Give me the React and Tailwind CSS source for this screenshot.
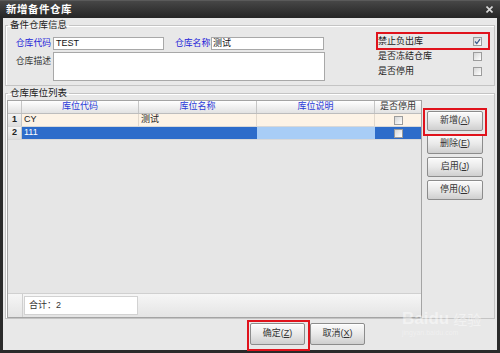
import React from "react";

function Check({ checked }) {
  return (
    <span className="flex h-[9px] w-[9px] items-center justify-center border border-[#9c9c9c] bg-gradient-to-br from-[#d6d6d6] to-white">
      {checked && (
        <svg width="7" height="7" viewBox="0 0 7 7">
          <path d="M1 3.5 L2.8 5.5 L6 1.2" fill="none" stroke="#3b5a8c" strokeWidth="1.2" />
        </svg>
      )}
    </span>
  );
}

function Btn({ label, mn, className = "" }) {
  return (
    <div
      className={`flex items-center justify-center rounded-[2px] border border-[#8c8c8c] bg-gradient-to-b from-[#fbfbfb] via-[#e9e9e9] to-[#cfcfcf] text-[9px] text-[#333] shadow-[inset_0_1px_0_#fff] ${className}`}
    >
      {label}(<span className="underline">{mn}</span>)
    </div>
  );
}

const rows = [
  { n: "1", code: "CY", name: "测试", selected: false },
  { n: "2", code: "111", name: "", selected: true },
];

export default function App() {
  return (
    <div className="relative flex h-[353px] w-[500px] flex-col overflow-hidden bg-[#2a2a2a] font-['Liberation_Sans','Noto_Sans_CJK_SC',sans-serif]">
      {/* title bar */}
      <div className="flex h-[18px] shrink-0 items-center justify-between border-t border-[#5a5a5a] bg-gradient-to-b from-[#474747] to-[#252525] pl-[6px] pr-[7px]">
        <span className="text-[10.5px] font-bold tracking-[0.5px] text-white">新增备件仓库</span>
        <svg width="7" height="7" viewBox="0 0 7 7">
          <path d="M0.5 0.5 L6.5 6.5 M6.5 0.5 L0.5 6.5" stroke="#d8d8d8" strokeWidth="1.6" />
        </svg>
      </div>

      {/* body */}
      <div className="mx-[3px] mb-[3px] flex flex-1 flex-col bg-[#e8e8e8] px-[2px]">
        {/* group 1 */}
        <fieldset className="mt-[1px] border border-[#c4c4c4] shadow-[inset_1px_1px_0_#fff]">
          <legend className="ml-[2px] px-[2px] text-[9.5px] leading-[12px] text-[#222]">备件仓库信息</legend>
          <div className="flex pb-[4px] pt-[6px]">
            <div className="flex flex-col gap-[2px]">
              <div className="flex h-[13px] items-center whitespace-nowrap text-[8.8px]">
                <span className="w-[47px] pr-[2px] text-right text-[#2323d8]">仓库代码</span>
                <div className="flex h-[13px] w-[111px] items-center border border-[#a8a8a8] bg-white pl-[2px] text-[9px] text-[#111]">TEST</div>
                <span className="ml-[11px] w-[36px] text-[#2323d8]">仓库名称</span>
                <div className="flex h-[13px] w-[113px] items-center border border-[#a8a8a8] bg-white pl-[1px] text-[9px] text-[#111]">测试</div>
              </div>
              <div className="flex h-[29px] whitespace-nowrap text-[8.8px]">
                <span className="w-[47px] pr-[2px] pt-[3px] text-right text-[#333]">仓库描述</span>
                <div className="h-[29px] w-[272px] border border-[#a8a8a8] bg-white" />
              </div>
            </div>
            <div className="-mt-[3px] ml-[49px] flex w-[114px] flex-col text-[9px] text-[#222]">
              {[
                ["禁止负出库", true],
                ["是否冻结仓库", false],
                ["是否停用", false],
              ].map(([t, c]) => (
                <div key={t} className="flex h-[15px] items-center justify-between pl-[4px] pr-[6px]">
                  <span>{t}</span>
                  <Check checked={c} />
                </div>
              ))}
            </div>
          </div>
        </fieldset>

        {/* group 2 */}
        <fieldset className="mt-[1px] border border-[#c4c4c4] shadow-[inset_1px_1px_0_#fff]">
          <legend className="ml-[2px] px-[2px] text-[9.5px] leading-[12px] text-[#222]">仓库库位列表</legend>
          <div className="flex pt-[1px]">
            {/* table */}
            <div className="ml-[1px] flex h-[218px] w-[415px] flex-col border border-[#a4a4a4] bg-[#e6e6e6]">
              <div className="flex h-[13px] border-b border-[#bdbdbd] bg-gradient-to-b from-white to-[#e2e2e2] text-[9px] text-[#2a3ad8]">
                <div className="w-[14px] border-r border-[#c6c6c6]" />
                <div className="flex w-[117px] items-center justify-center border-r border-[#c6c6c6]">库位代码</div>
                <div className="flex w-[118px] items-center justify-center border-r border-[#c6c6c6]">库位名称</div>
                <div className="flex w-[118px] items-center justify-center border-r border-[#c6c6c6]">库位说明</div>
                <div className="flex flex-1 items-center justify-center text-[#333]">是否停用</div>
              </div>
              {rows.map((r) => (
                <div
                  key={r.n}
                  className={`flex h-[13px] border-b border-[#d8d8d8] text-[9px] ${r.selected ? "bg-[#2d6cca] text-white" : "bg-[#fdf3e6] text-[#222]"}`}
                >
                  <div className="flex w-[14px] items-center justify-center border-r border-[#c6c6c6] bg-gradient-to-b from-[#f4f4f4] to-[#dedede] font-bold text-[#222]">
                    {r.n}
                  </div>
                  <div className={`flex w-[117px] items-center pl-[2px] ${r.selected ? "" : "border-r border-[#e2d8cc]"}`}>{r.code}</div>
                  <div className={`flex w-[118px] items-center pl-[2px] ${r.selected ? "" : "border-r border-[#e2d8cc]"}`}>{r.name}</div>
                  <div className={`w-[118px] ${r.selected ? "bg-[#a8cdf6]" : "border-r border-[#e2d8cc]"}`} />
                  <div className="flex flex-1 items-center justify-center">
                    <Check checked={false} />
                  </div>
                </div>
              ))}
              <div className="flex-1" />
              <div className="flex h-[24px] items-center border-t border-[#d0d0d0] bg-gradient-to-b from-[#f6f6f6] to-[#e4e4e4]">
                <div className="h-full w-[15px] border-r border-[#cfcfcf]" />
                <div className="ml-[1px] flex h-[19px] w-[114px] items-center border border-[#d2d2d2] bg-white pl-[4px] text-[9px] text-[#333]">
                  合计：2
                </div>
              </div>
            </div>

            {/* side buttons */}
            <div className="ml-[5px] flex flex-col gap-[3px] pt-[11px]">
              <Btn label="新增" mn="A" className="h-[20px] w-[56px]" />
              <Btn label="删除" mn="E" className="h-[20px] w-[56px]" />
              <Btn label="启用" mn="J" className="h-[20px] w-[56px]" />
              <Btn label="停用" mn="K" className="h-[20px] w-[56px]" />
            </div>
          </div>
        </fieldset>

        {/* bottom buttons */}
        <div className="flex gap-[5px] pl-[245px] pt-[4px]">
          <Btn label="确定" mn="Z" className="h-[22px] w-[55px]" />
          <Btn label="取消" mn="X" className="h-[22px] w-[55px]" />
        </div>
      </div>

      {/* baidu watermark */}
      <div className="pointer-events-none absolute left-[402px] top-[310px] flex flex-col items-start text-white/45">
        <div className="flex items-end">
          <span className="text-[17px] font-bold leading-[18px]">Bai</span>
          <span className="text-[17px] font-bold leading-[18px]">du</span>
          <span className="ml-[4px] text-[14px] leading-[16px]">经验</span>
        </div>
        <span className="text-[7px] leading-[9px] text-white/35">jingyan.baidu.com</span>
      </div>

      {/* red highlight boxes */}
      <div className="pointer-events-none absolute left-[376px] top-[32px] h-[18px] w-[114px] border-2 border-[#e0131c]" />
      <div className="pointer-events-none absolute left-[423px] top-[108px] h-[28px] w-[64px] border-2 border-[#e0131c]" />
      <div className="pointer-events-none absolute left-[247px] top-[320px] h-[31px] w-[63px] border-2 border-[#e0131c]" />
    </div>
  );
}
